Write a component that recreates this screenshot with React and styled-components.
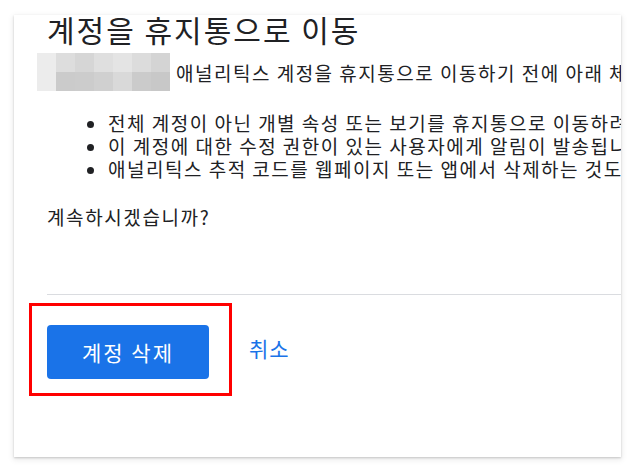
import React from "react";
import styled, { createGlobalStyle } from "styled-components";

const Global = createGlobalStyle`
  html, body { margin: 0; padding: 0; background: #ffffff; }
  body { font-family: "Noto Sans CJK KR", "Noto Sans", sans-serif; color: #202124; }
`;

const Page = styled.div`
  padding: 15px 0 0 14px;
  width: 636px;
  height: 472px;
  box-sizing: border-box;
`;

const Card = styled.div`
  width: 607px;
  height: 442px;
  background: #fff;
  box-shadow: 0 1px 2px rgba(0,0,0,0.18), 0 2px 6px 1px rgba(0,0,0,0.08);
  overflow: hidden;
  display: flex;
  flex-direction: column;
  padding-left: 33px;
  box-sizing: border-box;
`;

const Title = styled.h1`
  margin: -2px 0 0;
  font-size: 30px;
  font-weight: 400;
  letter-spacing: 2px;
  line-height: 32px;
  white-space: nowrap;
  color: #202124;
`;

const Intro = styled.div`
  display: flex;
  align-items: center;
  gap: 6px;
  margin: 8px 0 0 -10px;
  white-space: nowrap;
  font-size: 19px;
  letter-spacing: 1.5px;
  line-height: 23px;
`;

const Mosaic = styled.div`
  display: grid;
  grid-template-columns: repeat(7, 19px);
  grid-template-rows: repeat(2, 19px);
  flex-shrink: 0;
`;

const Cell = styled.div`
  background: ${p => p.$c};
`;

const List = styled.ul`
  margin: 20px 0 0;
  padding-left: 61px;
  font-size: 19px;
  letter-spacing: 1.5px;
  line-height: 23px;
  white-space: nowrap;
`;

const Question = styled.p`
  margin: 25px 0 0;
  font-size: 19px;
  letter-spacing: 1.6px;
  line-height: 23px;
`;

const Divider = styled.hr`
  border: 0;
  border-top: 1px solid #dadce0;
  margin: 66px 0 0;
`;

const Actions = styled.div`
  display: flex;
  align-items: center;
  margin: 8px 0 0 -18px;
  gap: 17px;
`;

const Highlight = styled.div`
  border: 3px solid #ff0000;
  padding: 19px 20px 14px 15px;
`;

const PrimaryButton = styled.button`
  width: 162px;
  height: 54px;
  border: 0;
  border-radius: 4px;
  background: #1a73e8;
  color: #fff;
  font-family: inherit;
  font-size: 21px;
  letter-spacing: 2px;
  cursor: pointer;
`;

const TextButton = styled.button`
  border: 0;
  background: none;
  padding: 0;
  color: #1a73e8;
  font-family: inherit;
  font-size: 21px;
  letter-spacing: 1px;
  margin-top: -4px;
  cursor: pointer;
`;

const colors = [
  "#ececec", "#dddddd", "#d6d6d6", "#dfdfdf", "#e4e4e4", "#dcdcdc", "#d4d4d4",
  "#ececec", "#cbcbcb", "#cccccc", "#d0d0d0", "#d9d9d9", "#cbcbcb", "#c8c8c8",
];

export default function App() {
  return (
    <>
      <Global />
      <Page>
        <Card>
          <Title>계정을 휴지통으로 이동</Title>
          <Intro>
            <Mosaic>
              {colors.map((c, i) => <Cell key={i} $c={c} />)}
            </Mosaic>
            <span>애널리틱스 계정을 휴지통으로 이동하기 전에 아래 체크 사항을 확인하세요.</span>
          </Intro>
          <List>
            <li>전체 계정이 아닌 개별 속성 또는 보기를 휴지통으로 이동하려면 관리 페이지로 이동하세요.</li>
            <li>이 계정에 대한 수정 권한이 있는 사용자에게 알림이 발송됩니다.</li>
            <li>애널리틱스 추적 코드를 웹페이지 또는 앱에서 삭제하는 것도 고려해 보세요.</li>
          </List>
          <Question>계속하시겠습니까?</Question>
          <Divider />
          <Actions>
            <Highlight>
              <PrimaryButton>계정 삭제</PrimaryButton>
            </Highlight>
            <TextButton>취소</TextButton>
          </Actions>
        </Card>
      </Page>
    </>
  );
}
